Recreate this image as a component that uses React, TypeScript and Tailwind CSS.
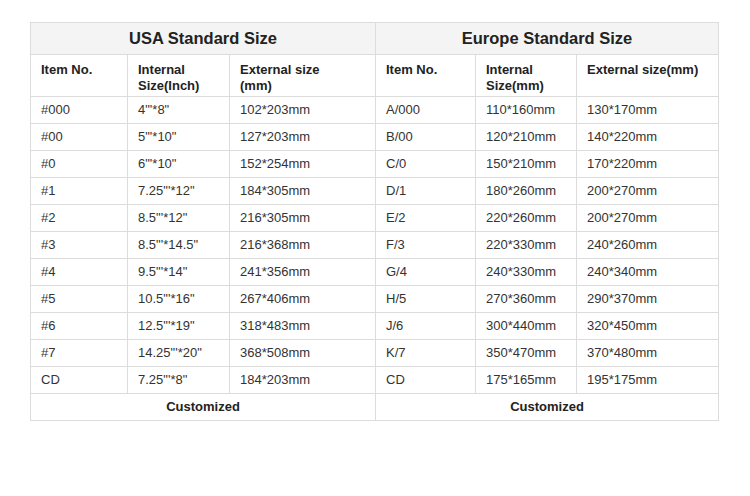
const usa = [
  ["#000", "4\"'*8\"", "102*203mm"],
  ["#00", "5\"'*10\"", "127*203mm"],
  ["#0", "6\"'*10\"", "152*254mm"],
  ["#1", "7.25\"'*12\"", "184*305mm"],
  ["#2", "8.5\"'*12\"", "216*305mm"],
  ["#3", "8.5\"'*14.5\"", "216*368mm"],
  ["#4", "9.5\"'*14\"", "241*356mm"],
  ["#5", "10.5\"'*16\"", "267*406mm"],
  ["#6", "12.5\"'*19\"", "318*483mm"],
  ["#7", "14.25\"'*20\"", "368*508mm"],
  ["CD", "7.25\"'*8\"", "184*203mm"],
];

const europe = [
  ["A/000", "110*160mm", "130*170mm"],
  ["B/00", "120*210mm", "140*220mm"],
  ["C/0", "150*210mm", "170*220mm"],
  ["D/1", "180*260mm", "200*270mm"],
  ["E/2", "220*260mm", "200*270mm"],
  ["F/3", "220*330mm", "240*260mm"],
  ["G/4", "240*330mm", "240*340mm"],
  ["H/5", "270*360mm", "290*370mm"],
  ["J/6", "300*440mm", "320*450mm"],
  ["K/7", "350*470mm", "370*480mm"],
  ["CD", "175*165mm", "195*175mm"],
];

const cell = "border border-[#dcdcdc] px-[10px] align-middle";
const head = "border border-[#dcdcdc] px-[10px] pt-[7px] align-top font-bold leading-[16px] text-[#222]";

export default function App() {
  return (
    <div className="w-[750px] h-[496px] bg-white pl-[30px] pt-[22px] font-['Liberation_Sans',Arial,sans-serif] text-[13px] text-[#333]">
      <table className="table-fixed border-collapse w-[688px]">
        <colgroup>
          <col className="w-[97px]" />
          <col className="w-[102px]" />
          <col className="w-[146px]" />
          <col className="w-[100px]" />
          <col className="w-[101px]" />
          <col className="w-[142px]" />
        </colgroup>
        <tbody>
          <tr className="h-[32px] bg-[#f4f4f4]">
            <td colSpan={3} className="border border-[#dcdcdc] text-center text-[16.5px] font-bold text-[#222]">
              USA Standard Size
            </td>
            <td colSpan={3} className="border border-[#dcdcdc] text-center text-[16.5px] font-bold text-[#222]">
              Europe Standard Size
            </td>
          </tr>
          <tr className="h-[42px]">
            <td className={head}>Item No.</td>
            <td className={head}>Internal<br />Size(Inch)</td>
            <td className={head}>External size<br />(mm)</td>
            <td className={head}>Item No.</td>
            <td className={head}>Internal<br />Size(mm)</td>
            <td className={head}>External size(mm)</td>
          </tr>
          {usa.map((r, i) => (
            <tr key={i} className="h-[27px]">
              <td className={cell}>{r[0]}</td>
              <td className={cell}>{r[1]}</td>
              <td className={cell}>{r[2]}</td>
              <td className={cell}>{europe[i][0]}</td>
              <td className={cell}>{europe[i][1]}</td>
              <td className={cell}>{europe[i][2]}</td>
            </tr>
          ))}
          <tr className="h-[27px]">
            <td colSpan={3} className="border border-[#dcdcdc] text-center font-bold text-[#222]">
              Customized
            </td>
            <td colSpan={3} className="border border-[#dcdcdc] text-center font-bold text-[#222]">
              Customized
            </td>
          </tr>
        </tbody>
      </table>
    </div>
  );
}
